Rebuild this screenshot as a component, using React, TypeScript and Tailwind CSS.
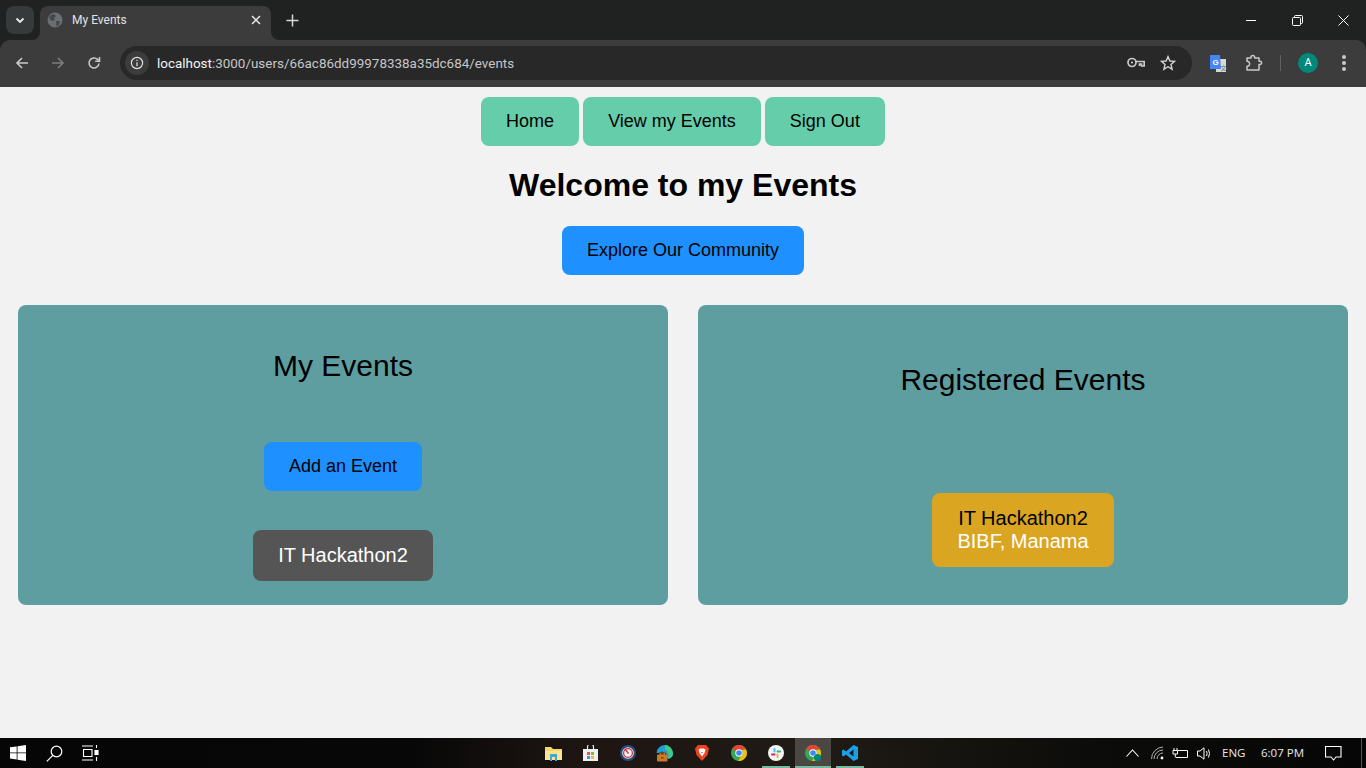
import React from "react";

function Globe() {
  return (
    <svg width="16" height="16" viewBox="0 0 16 16" className="shrink-0">
      <circle cx="8" cy="8" r="7.5" fill="#6a6e72" />
      <path d="M3 3.5 L7 2 L9 4 L7 6 L8 8 L5 9 L2 6 Z M9 9 L13 9 L12 13 L9.5 14.5 Z" fill="#45484b" />
    </svg>
  );
}

function Tabbar() {
  return (
    <div className="h-10 bg-[#202222] flex items-start relative shrink-0">
      <div className="ml-[6px] mt-[6px] w-[28px] h-[28px] rounded-lg bg-[#373a3a] flex items-center justify-center">
        <svg width="12" height="12" viewBox="0 0 12 12" fill="none" stroke="#e8eaed" strokeWidth="1.8">
          <path d="M2.5 4.5 L6 8 L9.5 4.5" />
        </svg>
      </div>
      <div className="relative ml-[6px] mt-[6px] w-[231px] h-[34px] bg-[#3c3c3c] rounded-t-lg flex items-center pl-[7px] pr-[10px] pb-[6px]">
        <Globe />
        <span className="ml-[9px] text-[12px] text-[#e3e3e3] font-['Roboto',sans-serif] flex-1">My Events</span>
        <svg width="10" height="10" viewBox="0 0 10 10" stroke="#e8eaed" strokeWidth="1.5">
          <path d="M1 1 L9 9 M9 1 L1 9" />
        </svg>
        <svg width="8" height="8" viewBox="0 0 8 8" className="absolute bottom-0 -right-2">
          <path d="M0 0 A8 8 0 0 0 8 8 H0 Z" fill="#3c3c3c" />
        </svg>
        <svg width="8" height="8" viewBox="0 0 8 8" className="absolute bottom-0 -left-2">
          <path d="M8 0 A8 8 0 0 1 0 8 H8 Z" fill="#3c3c3c" />
        </svg>
      </div>
      <svg width="13" height="13" viewBox="0 0 13 13" stroke="#d5d7d9" strokeWidth="1.5" className="ml-[15px] mt-[14px]">
        <path d="M6.5 0.5 V12.5 M0.5 6.5 H12.5" />
      </svg>
      <div className="ml-auto flex items-start">
        <div className="w-[46px] h-10 flex items-center justify-center">
          <div className="w-[10px] h-[1px] bg-white" />
        </div>
        <div className="w-[46px] h-10 flex items-center justify-center">
          <svg width="11" height="11" viewBox="0 0 11 11" fill="none" stroke="#fff" strokeWidth="1">
            <rect x="0.5" y="2.5" width="8" height="8" rx="1" />
            <path d="M2.5 2.5 V1.5 a1 1 0 0 1 1 -1 H9.5 a1 1 0 0 1 1 1 V7.5 a1 1 0 0 1 -1 1 H8.5" />
          </svg>
        </div>
        <div className="w-[46px] h-10 flex items-center justify-center">
          <svg width="11" height="11" viewBox="0 0 11 11" stroke="#fff" strokeWidth="1">
            <path d="M0.5 0.5 L10.5 10.5 M10.5 0.5 L0.5 10.5" />
          </svg>
        </div>
      </div>
    </div>
  );
}

function Toolbar() {
  return (
    <div className="h-[47px] bg-[#3c3c3c] rounded-t-[10px] pb-[1px] flex items-center shrink-0 relative">
      <div className="pl-[15px] flex items-center">
        <svg width="14" height="14" viewBox="0 0 14 14" fill="none" stroke="#c7c9cb" strokeWidth="1.6">
          <path d="M13 7 H2 M7 2 L2 7 L7 12" />
        </svg>
        <svg width="14" height="14" viewBox="0 0 14 14" fill="none" stroke="#7b7d7f" strokeWidth="1.6" className="ml-[22px]">
          <path d="M1 7 H12 M7 2 L12 7 L7 12" />
        </svg>
        <svg width="14" height="14" viewBox="0 0 14 14" fill="none" stroke="#c7c9cb" strokeWidth="1.6" className="ml-[22px]">
          <path d="M12 7.5 A5 5 0 1 1 10.5 3.4 L12.3 5" />
          <path d="M12.5 1 V5.3 H8.2" fill="none" />
        </svg>
      </div>
      <div className="ml-[19px] w-[1072px] h-[34px] rounded-full bg-[#282828] flex items-center pl-[5px] pr-4">
        <div className="w-6 h-6 rounded-full bg-[#3c3c3c] flex items-center justify-center">
          <svg width="14" height="14" viewBox="0 0 14 14" fill="none" stroke="#e3e3e3" strokeWidth="1.2">
            <circle cx="7" cy="7" r="5.6" />
            <path d="M7 6.2 V10.2 M7 3.8 V5" />
          </svg>
        </div>
        <div className="ml-[8px] pt-[2px] text-[13.45px] font-['Roboto',sans-serif] text-[#c4c7c9] whitespace-nowrap">
          <span className="text-[#f1f3f4]">localhost</span>:3000/users/66ac86dd99978338a35dc684/events
        </div>
        <div className="ml-auto flex items-center gap-[14px]">
          <svg width="18" height="12" viewBox="0 0 18 12" fill="none" stroke="#c7c9cb" strokeWidth="1.7" className="-ml-[1px] mr-[1px]">
            <circle cx="5" cy="5.5" r="4" />
            <circle cx="5" cy="5.5" r="1.1" fill="#c7c9cb" stroke="none" />
            <path d="M9 4.5 H17.2 V9 H14.5 V7 H12.5 V9" />
          </svg>
          <svg width="16" height="16" viewBox="0 0 16 16" fill="none" stroke="#d0d2d4" strokeWidth="1.4">
            <path d="M8 1.6 L9.9 6 L14.6 6.4 L11 9.5 L12.1 14.2 L8 11.7 L3.9 14.2 L5 9.5 L1.4 6.4 L6.1 6 Z" />
          </svg>
        </div>
      </div>
      <svg width="17" height="17" viewBox="0 0 17 17" className="ml-[18px]">
        <path d="M6 4 H16 V17 H6 Z" fill="#d8d8d8" />
        <path d="M0 0 H10 L11 14 H0 Z" fill="#4285f4" />
        <text x="2.5" y="10" fontSize="8" fill="#fff" fontWeight="700" fontFamily="Liberation Sans, sans-serif">G</text>
        <text x="10.5" y="14.5" fontSize="6" fill="#6b7280" fontFamily="Noto Sans CJK JP, sans-serif">文</text>
      </svg>
      <svg width="18" height="18" viewBox="0 0 18 18" fill="none" stroke="#c7c9cb" strokeWidth="1.5" className="ml-[18px]">
        <path
          d="M2 4 H6 V3.2 a1.8 1.8 0 0 1 3.6 0 V4 H14 V7.2 H15 a1.6 1.6 0 0 1 0 3.2 H14 V16 H2 V12.2 H2.8 a2.6 2.6 0 0 0 0 -5 H2 Z"
          strokeLinejoin="round"
        />
      </svg>
      <div className="ml-[17px] w-[1px] h-4 bg-[#5f6265]" />
      <div className="ml-[17px] w-5 h-5 rounded-full bg-[#00897b] flex items-center justify-center text-[11px] text-white font-['Roboto',sans-serif]">
        A
      </div>
      <div className="ml-[24px] flex flex-col gap-[2px]">
        <div className="w-[4px] h-[4px] rounded-full bg-[#c7c9cb]" />
        <div className="w-[4px] h-[4px] rounded-full bg-[#c7c9cb]" />
        <div className="w-[4px] h-[4px] rounded-full bg-[#c7c9cb]" />
      </div>
    </div>
  );
}

const btn = "rounded-lg px-[25px] h-[49px] text-[18px] text-black flex items-center justify-center whitespace-nowrap";

function Page() {
  return (
    <div className="flex-1 bg-[#f2f2f2] font-['Liberation_Sans',Arial,sans-serif] overflow-hidden pt-[10px]">
      <nav className="flex justify-center gap-1">
        <button className={`${btn} bg-[#66cdaa]`}>Home</button>
        <button className={`${btn} bg-[#66cdaa]`}>View my Events</button>
        <button className={`${btn} bg-[#66cdaa]`}>Sign Out</button>
      </nav>
      <h1 className="text-[32px] leading-[37px] font-bold text-center text-black mt-[21px]">Welcome to my Events</h1>
      <div className="flex justify-center mt-[22px]">
        <button className={`${btn} bg-[#1e90ff]`}>Explore Our Community</button>
      </div>
      <div className="mt-[30px] px-[18px] flex gap-[30px]">
        <section className="w-[650px] h-[300px] bg-[#5f9ea0] rounded-lg flex flex-col items-center">
          <h2 className="text-[30px] leading-[34px] text-black mt-[44px]">My Events</h2>
          <button className={`${btn} bg-[#1e90ff] mt-[59px]`}>Add an Event</button>
          <div className="mt-[39px] w-[180px] h-[51px] pb-[2px] rounded-lg bg-[#555555] text-white text-[20px] flex items-center justify-center">
            IT Hackathon2
          </div>
        </section>
        <section className="w-[650px] h-[300px] bg-[#5f9ea0] rounded-lg flex flex-col items-center">
          <h2 className="text-[30px] leading-[34px] text-black mt-[58px]">Registered Events</h2>
          <div className="mt-[96px] w-[182px] h-[74px] rounded-lg bg-[#daa520] text-[20px] leading-[23px] text-center flex flex-col items-center justify-center">
            <span className="text-black">IT Hackathon2</span>
            <span className="text-white">BIBF, Manama</span>
          </div>
        </section>
      </div>
    </div>
  );
}

function TaskIcon({ children, line, active }: { children: React.ReactNode; line?: boolean; active?: boolean }) {
  return (
    <div className="relative w-[37px] h-[30px] flex items-center justify-center">
      {active && <div className="absolute inset-y-0 left-[1px] right-0 bg-[#ffffff33]" />}
      <div className="relative flex">{children}</div>
      {line && (
        <div
          className={`absolute bottom-0 h-[2px] bg-[#76b9a0] ${active ? "left-[1px] right-0" : "left-[5px] right-[4px]"}`}
        />
      )}
    </div>
  );
}

function ChromeIcon({ badge }: { badge?: boolean }) {
  return (
    <svg width="16" height="16" viewBox="0 0 16 16">
      <circle cx="8" cy="8" r="8" fill="#34a853" />
      <path d="M8 0 A8 8 0 0 1 15 4.4 L8 4.4 A3.6 3.6 0 0 0 4.6 7 L1.4 3.4 A8 8 0 0 1 8 0 Z" fill="#ea4335" />
      <path d="M15 4.4 A8 8 0 0 1 7 16 L10.6 10.4 A3.6 3.6 0 0 0 10.8 5 Z" fill="#fbbc04" />
      <circle cx="8" cy="8" r="3.7" fill="#fff" />
      <circle cx="8" cy="8" r="2.8" fill="#4285f4" />
      {badge && <circle cx="12.5" cy="12.5" r="3.5" fill="#00897b" />}
    </svg>
  );
}

function Taskbar() {
  return (
    <div className="h-[30px] shrink-0 bg-[linear-gradient(90deg,#060606_0%,#070707_30%,#1d1512_42%,#1f1b15_60%,#0c0c0a_80%,#060606_100%)] flex items-center text-white">
      <div className="w-[535px] flex items-center">
        <svg width="16" height="16" viewBox="0 0 16 16" fill="#fff" className="ml-[10px]">
          <path d="M0 2.3 L6.7 1.4 V7.5 H0 Z M7.5 1.2 L16 0 V7.5 H7.5 Z M0 8.3 H6.7 V14.5 L0 13.6 Z M7.5 8.3 H16 V16 L7.5 14.7 Z" />
        </svg>
        <svg width="17" height="17" viewBox="0 0 17 17" fill="none" stroke="#fff" strokeWidth="1.2" className="ml-[20px]">
          <circle cx="10.5" cy="6.5" r="5.3" />
          <path d="M6.8 10.3 L0.8 16.3" />
        </svg>
        <svg width="17" height="16" viewBox="0 0 17 16" fill="none" stroke="#fff" strokeWidth="1.1" className="ml-[19px]">
          <path d="M0 1 H11 M0 15 H11 M1.5 4.5 H10 V11.5 H1.5 Z" />
          <path d="M14.5 0 V3 M14.5 12 V16" />
          <rect x="13" y="5.5" width="3" height="4" fill="#fff" />
        </svg>
      </div>
      <div className="flex">
        <TaskIcon>
          <svg width="17" height="15" viewBox="0 0 17 15">
            <path d="M0 1 H6 L8 3 H17 V14 H0 Z" fill="#f6d56b" />
            <path d="M0 5 H17 V14 H0 Z" fill="#fce490" />
            <path d="M5 8 H12 V15 H10 V11 H7 V15 H5 Z" fill="#3ba9e0" />
          </svg>
        </TaskIcon>
        <TaskIcon>
          <svg width="15" height="16" viewBox="0 0 15 16">
            <path d="M0 4 H15 V16 H0 Z" fill="#f0f0f0" />
            <path d="M4.5 4 V2 a3 3 0 0 1 6 0 V4" fill="none" stroke="#e8e8e8" strokeWidth="1.2" />
            <rect x="4" y="7" width="3" height="3" fill="#e8533c" />
            <rect x="8" y="7" width="3" height="3" fill="#7db93f" />
            <rect x="4" y="11" width="3" height="3" fill="#2f9ae0" />
            <rect x="8" y="11" width="3" height="3" fill="#f5b82e" />
          </svg>
        </TaskIcon>
        <TaskIcon>
          <svg width="16" height="16" viewBox="0 0 16 16">
            <circle cx="8" cy="8" r="8" fill="#2a4a7b" />
            <circle cx="8" cy="8" r="5.8" fill="#f4f4f4" />
            <circle cx="8" cy="8" r="4.4" fill="none" stroke="#c8323c" strokeWidth="1.3" />
            <path d="M5 4 L8.5 8.5" stroke="#c8323c" strokeWidth="1.4" />
          </svg>
        </TaskIcon>
        <TaskIcon>
          <svg width="17" height="17" viewBox="0 0 17 17">
            <path d="M8.5 0 A8.5 8.5 0 0 1 17 8.5 C17 12 14 14 11.5 13.5 L10 9 C9 6.5 5 6 3 8 L0.5 8 A8.5 8.5 0 0 1 8.5 0 Z" fill="#1f9fd8" />
            <path d="M9 0 A8.5 8.5 0 0 1 17 8.5 C17 12 14 14 11.5 13.5 C13.5 11.5 13 6 9 4.5 Z" fill="#45c97f" />
            <rect x="1" y="9.5" width="10.5" height="7" rx="1" fill="#c77a28" />
            <rect x="4" y="8" width="4.5" height="2" fill="none" stroke="#c77a28" />
            <rect x="5" y="12" width="2.5" height="1.5" fill="#7a4612" />
          </svg>
        </TaskIcon>
        <TaskIcon>
          <svg width="14" height="16" viewBox="0 0 14 16">
            <path d="M3 0 H11 L14 3.5 L12.5 10 L7 16 L1.5 10 L0 3.5 Z" fill="#f0431f" />
            <path d="M3.5 4.5 L5.5 3.5 H8.5 L10.5 4.5 L9.5 8 L7 11.5 L4.5 8 Z" fill="#fff" />
            <path d="M6 7 H8 L7 8.5 Z" fill="#f0431f" />
          </svg>
        </TaskIcon>
        <TaskIcon>
          <ChromeIcon />
        </TaskIcon>
        <TaskIcon line>
          <svg width="16" height="16" viewBox="0 0 16 16">
            <circle cx="8" cy="8" r="8" fill="#f4f4f4" />
            <rect x="5.5" y="3" width="2" height="4.5" rx="1" fill="#36c5f0" />
            <rect x="8.5" y="5.5" width="4.5" height="2" rx="1" fill="#2eb67d" />
            <rect x="8.5" y="8.5" width="2" height="4.5" rx="1" fill="#ecb22e" />
            <rect x="3" y="8.5" width="4.5" height="2" rx="1" fill="#e01e5a" />
          </svg>
        </TaskIcon>
        <TaskIcon line active>
          <ChromeIcon badge />
        </TaskIcon>
        <TaskIcon line>
          <svg width="16" height="16" viewBox="0 0 16 16">
            <path d="M11.5 0 L16 2 V14 L11.5 16 L4 9.5 L1.5 11.5 L0 10.5 V5.5 L1.5 4.5 L4 6.5 Z M11.5 4.5 L7 8 L11.5 11.5 Z" fill="#1b9fe8" />
          </svg>
        </TaskIcon>
      </div>
      <div className="ml-auto flex items-center text-[12px] font-['Open_Sans',sans-serif] text-[#e8e8e8]">
        <svg width="13" height="8" viewBox="0 0 13 8" fill="none" stroke="#fff" strokeWidth="1.1">
          <path d="M0.5 7.5 L6.5 1 L12.5 7.5" />
        </svg>
        <svg width="14" height="14" viewBox="0 0 14 14" fill="none" stroke="#b0b0b0" strokeWidth="1" className="ml-[12px]">
          <path d="M0.5 13 A12 12 0 0 1 12 1 M3 13 A9 9 0 0 1 12 4 M6 13 A6 6 0 0 1 12 7" />
          <circle cx="11" cy="12" r="1.4" fill="#fff" stroke="none" />
        </svg>
        <svg width="16" height="11" viewBox="0 0 16 11" fill="none" stroke="#fff" strokeWidth="1" className="ml-[7px]">
          <path d="M6 2.5 H15.5 V9.5 H4 M2 0 V2.5 M5 0 V2.5 M1 2.5 H5.5 V6 H1 Z M3.3 6 V9.5" />
        </svg>
        <svg width="15" height="13" viewBox="0 0 15 13" fill="none" stroke="#fff" strokeWidth="1" className="ml-[9px]">
          <path d="M0.5 4 H3 L7 0.8 V12.2 L3 9 H0.5 Z M9.5 4 Q10.8 6.5 9.5 9 M11.5 2.5 Q13.5 6.5 11.5 10.5" />
        </svg>
        <span className="ml-[10px] w-[24px] text-[11.5px]">ENG</span>
        <span className="ml-[15px] w-[44px] text-[11.5px] whitespace-nowrap">6:07 PM</span>
        <svg width="17" height="15" viewBox="0 0 17 15" fill="none" stroke="#fff" strokeWidth="1.1" className="ml-[20px]">
          <path d="M0.5 0.5 H16 V11 H11 L8.5 14 L6 11 H0.5 Z" />
        </svg>
        <div className="ml-[19px] w-[1px] h-[30px] bg-[#555]" />
        <div className="w-[4px]" />
      </div>
    </div>
  );
}

export default function App() {
  return (
    <div className="h-screen w-full flex flex-col overflow-hidden bg-[#202222]">
      <Tabbar />
      <Toolbar />
      <Page />
      <Taskbar />
    </div>
  );
}
